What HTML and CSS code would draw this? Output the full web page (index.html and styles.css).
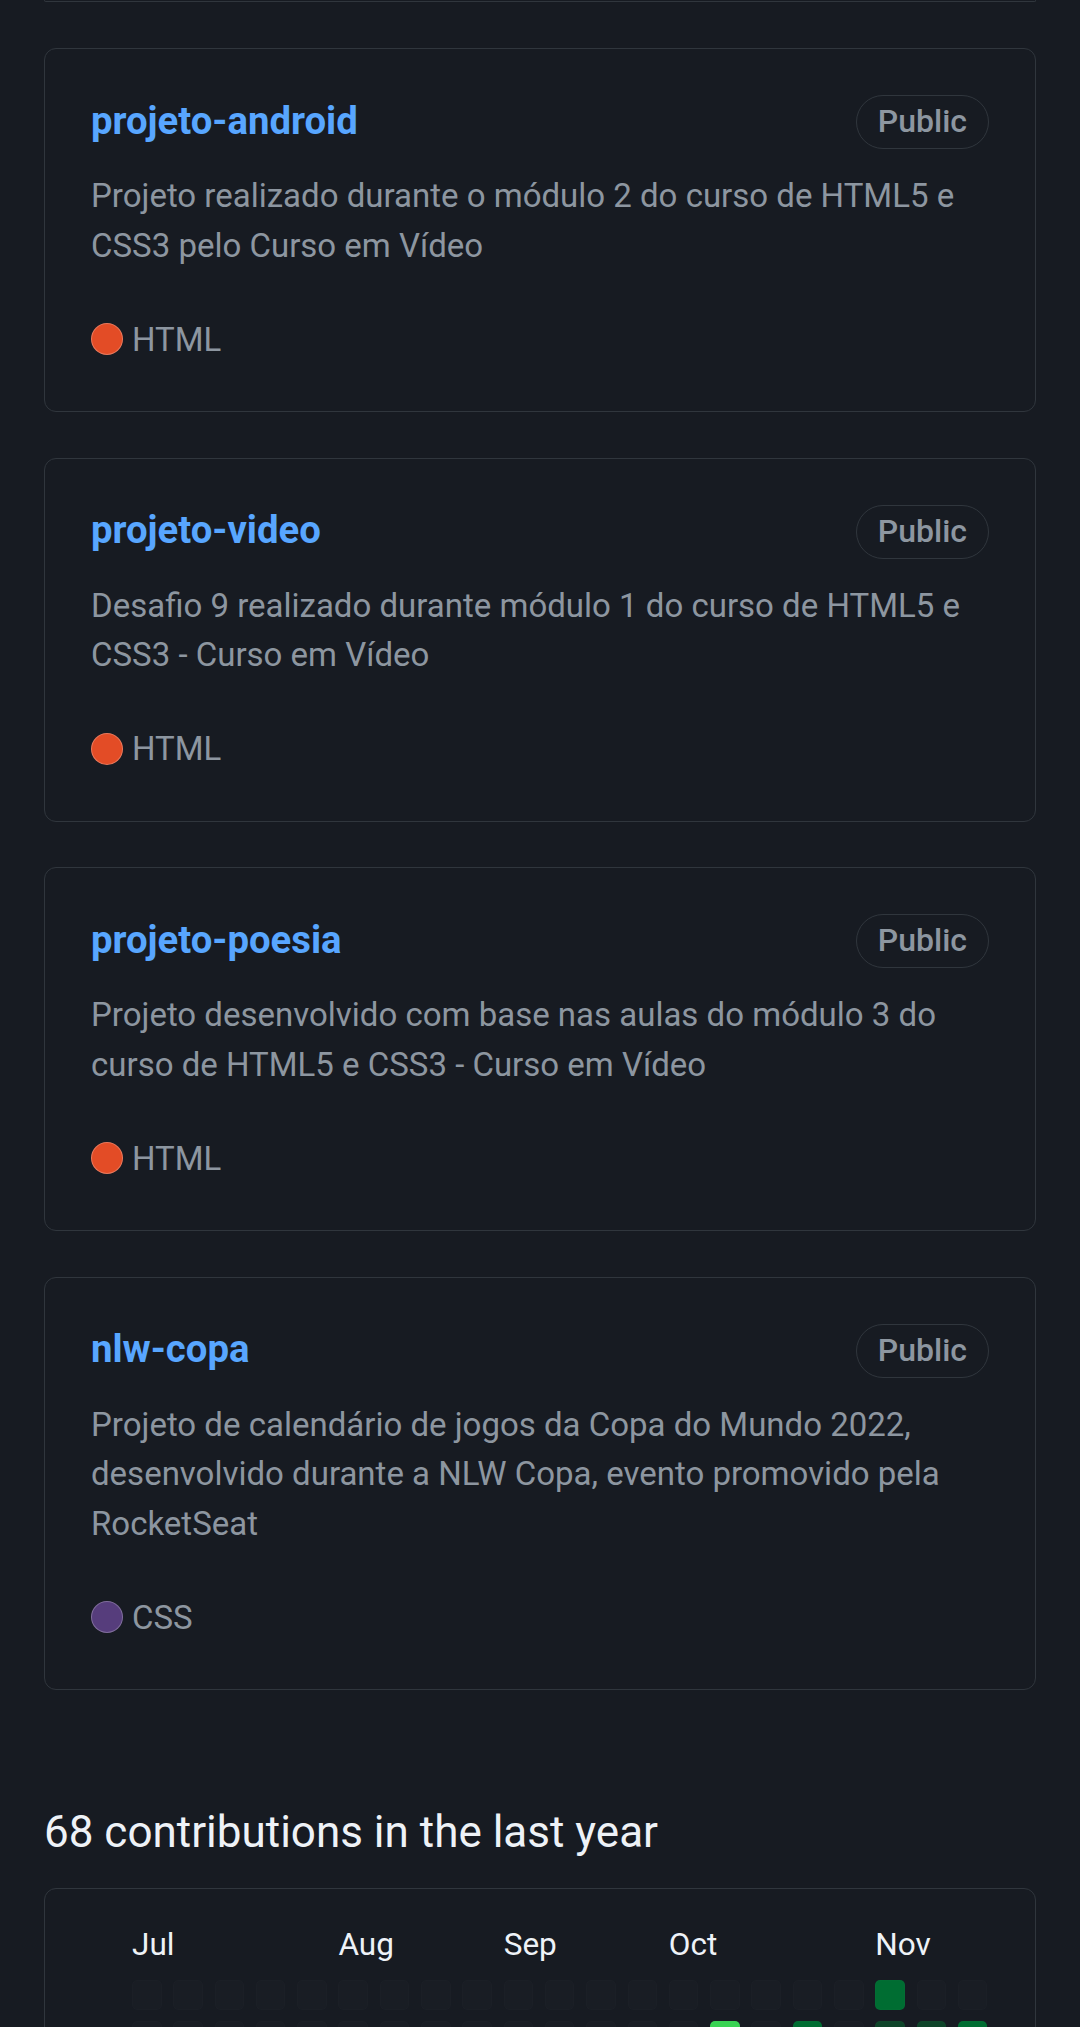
FILE: index.html
```html
<!DOCTYPE html>
<html lang="pt">
<head>
<meta charset="utf-8">
<title>Repositories</title>
<link rel="stylesheet" href="styles.css">
</head>
<body>
<div class="page">
  <div class="card-tail"></div>

  <div class="repo-list">
    <div class="repo-card">
      <div class="repo-head">
        <a class="repo-name" href="#">projeto-android</a>
        <span class="badge">Public</span>
      </div>
      <p class="repo-desc">Projeto realizado durante o módulo 2 do curso de HTML5 e CSS3 pelo Curso em Vídeo</p>
      <div class="repo-lang"><span class="dot dot-html"></span><span>HTML</span></div>
    </div>

    <div class="repo-card">
      <div class="repo-head">
        <a class="repo-name" href="#">projeto-video</a>
        <span class="badge">Public</span>
      </div>
      <p class="repo-desc">Desafio 9 realizado durante módulo 1 do curso de HTML5 e CSS3 - Curso em Vídeo</p>
      <div class="repo-lang"><span class="dot dot-html"></span><span>HTML</span></div>
    </div>

    <div class="repo-card">
      <div class="repo-head">
        <a class="repo-name" href="#">projeto-poesia</a>
        <span class="badge">Public</span>
      </div>
      <p class="repo-desc">Projeto desenvolvido com base nas aulas do módulo 3 do curso de HTML5 e CSS3 - Curso em Vídeo</p>
      <div class="repo-lang"><span class="dot dot-html"></span><span>HTML</span></div>
    </div>

    <div class="repo-card">
      <div class="repo-head">
        <a class="repo-name" href="#">nlw-copa</a>
        <span class="badge">Public</span>
      </div>
      <p class="repo-desc">Projeto de calendário de jogos da Copa do Mundo 2022, desenvolvido durante a NLW Copa, evento promovido pela RocketSeat</p>
      <div class="repo-lang"><span class="dot dot-css"></span><span>CSS</span></div>
    </div>
  </div>

  <h2 class="contrib-title">68 contributions in the last year</h2>

  <div class="contrib-card">
    <div class="months">
      <span class="m-jul">Jul</span>
      <span class="m-aug">Aug</span>
      <span class="m-sep">Sep</span>
      <span class="m-oct">Oct</span>
      <span class="m-nov">Nov</span>
    </div>
    <div class="graph">
      <!-- row 1 -->
      <i></i><i></i><i></i><i></i><i></i><i></i><i></i><i></i><i></i><i></i><i></i><i></i><i></i><i></i><i></i><i></i><i></i><i></i><i class="l2"></i><i></i><i></i>
      <!-- row 2 -->
      <i></i><i></i><i></i><i></i><i></i><i></i><i></i><i></i><i></i><i></i><i></i><i></i><i></i><i></i><i class="l4"></i><i></i><i class="l2"></i><i></i><i class="l1"></i><i class="l1"></i><i class="l2"></i>
      <!-- row 3 -->
      <i></i><i></i><i></i><i></i><i></i><i></i><i></i><i></i><i></i><i></i><i></i><i></i><i></i><i></i><i></i><i></i><i></i><i></i><i></i><i></i><i></i>
    </div>
  </div>
</div>
</body>
</html>
```

FILE: styles.css
```css
* { box-sizing: border-box; }

html, body {
  margin: 0;
  padding: 0;
  background: #171b22;
}

.page {
  height: 2027px;
  overflow: hidden;
  padding: 0 44px;
  font-family: Roboto, "Liberation Sans", sans-serif;
  color: #8d96a0;
}

.card-tail {
  height: 2px;
  border: 1px solid #30363d;
  border-top: none;
  border-radius: 0 0 10px 10px;
}

.repo-list {
  display: flex;
  flex-direction: column;
  gap: 45.6px;
  margin-top: 46px;
}

.repo-card {
  border: 1px solid #30363d;
  border-radius: 12px;
  padding: 42px 46px 47.5px 46px;
}

.repo-head {
  display: flex;
  justify-content: space-between;
  align-items: flex-start;
}

.repo-name {
  margin-top: 2.6px;
  font-size: 38.3px;
  font-weight: 700;
  line-height: 54px;
  color: #58a6ff;
  text-decoration: none;
}

.badge {
  margin-top: 4px;
  height: 54px;
  padding: 0 21px;
  border: 1.5px solid #30363d;
  border-radius: 27px;
  font-size: 32px;
  font-weight: 500;
  line-height: 51px;
  color: #8d96a0;
}

.repo-desc {
  margin: 22px 0 0;
  font-size: 33px;
  line-height: 49.5px;
  color: #8d96a0;
}

.repo-lang {
  margin-top: 44.5px;
  display: flex;
  align-items: center;
  gap: 9px;
  font-size: 33px;
  line-height: 49px;
  color: #8d96a0;
}

.dot {
  width: 32px;
  height: 32px;
  border-radius: 50%;
  border: 1.5px solid rgba(255, 255, 255, 0.25);
}
.dot-html { background: #e34c26; }
.dot-css { background: #563d7c; }

.contrib-title {
  margin: 112px 0 0;
  font-size: 44px;
  font-weight: 400;
  line-height: 60px;
  color: #eef2f7;
}

.contrib-card {
  margin-top: 26px;
  border: 1px solid #30363d;
  border-radius: 12px;
  padding: 36px 40px 40px 87px;
}

.months,
.graph {
  display: grid;
  grid-template-columns: repeat(21, 29.5px);
  column-gap: 11.8px;
}

.months {
  font-size: 31.5px;
  line-height: 40px;
  color: #eef2f7;
  white-space: nowrap;
}
.months span { grid-row: 1; }
.m-jul { grid-column: 1; }
.m-aug { grid-column: 6; }
.m-sep { grid-column: 10; }
.m-oct { grid-column: 14; }
.m-nov { grid-column: 19; }

.graph {
  margin-top: 15px;
  row-gap: 11px;
}

.graph i {
  display: block;
  height: 29.5px;
  border-radius: 5px;
  background: #191d24;
  outline: 1px solid rgba(255, 255, 255, 0.012);
  outline-offset: -1px;
}
.graph i.l1 { background: #0e4429; }
.graph i.l2 { background: #006d32; }
.graph i.l3 { background: #26a641; }
.graph i.l4 { background: #39d353; }
```
